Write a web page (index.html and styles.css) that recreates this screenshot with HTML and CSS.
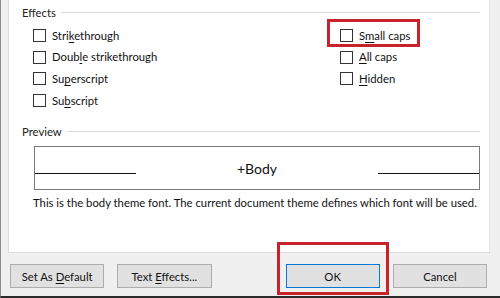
FILE: index.html
```html
<!DOCTYPE html>
<html>
<head>
<meta charset="utf-8">
<link rel="stylesheet" href="styles.css">
</head>
<body>
<div class="screen">
  <div class="panel">
    <div class="group-head"><span class="group-title">Effects</span><span class="group-line"></span></div>
    <div class="effects">
      <label class="opt"><span class="box"></span><span>Stri<u>k</u>ethrough</span></label>
      <label class="opt highlight"><span class="box"></span><span>S<u>m</u>all caps</span><span class="redbox small"></span></label>
      <label class="opt"><span class="box"></span><span>Doub<u>l</u>e strikethrough</span></label>
      <label class="opt"><span class="box"></span><span><u>A</u>ll caps</span></label>
      <label class="opt"><span class="box"></span><span>Su<u>p</u>erscript</span></label>
      <label class="opt"><span class="box"></span><span><u>H</u>idden</span></label>
      <label class="opt"><span class="box"></span><span>Su<u>b</u>script</span></label>
    </div>
    <div class="group-head preview-head"><span class="group-title">Preview</span><span class="group-line"></span></div>
    <div class="preview">
      <span class="rule"></span>
      <span class="sample">+Body</span>
      <span class="rule"></span>
    </div>
    <p class="desc">This is the body theme font. The current document theme defines which font will be used.</p>
  </div>
  <div class="buttons">
    <button class="btn">Set As <u>D</u>efault</button>
    <button class="btn">Text <u>E</u>ffects...</button>
    <button class="btn ok">OK<span class="redbox okbox"></span></button>
    <button class="btn">Cancel</button>
  </div>
</div>
</body>
</html>
```
FILE: styles.css
```css
* { box-sizing: border-box; }
html, body { margin: 0; padding: 0; }
body {
  font-family: Lato, "Noto Sans", sans-serif;
  font-size: 11.3px;
  color: #1a1a1a;
  background: #f0f0f0;
}
u { text-decoration: underline; text-underline-offset: 2px; }
.screen {
  width: 500px;
  height: 298px;
  background: #f0f0f0;
  border-left: 1px solid #8a8a8a;
  border-bottom: 2px solid #2a2a2a;
  display: flex;
  flex-direction: column;
}
.panel {
  margin-left: 7px;
  width: 482px;
  height: 253px;
  background: #fff;
  border-left: 1px solid #dcdcdc;
  border-right: 1px solid #e6e6e6;
  border-bottom: 1px solid #dcdcdc;
  padding: 5px 9px 0 13px;
  display: flex;
  flex-direction: column;
}
.group-head {
  display: flex;
  align-items: center;
  height: 16px;
  line-height: 16px;
}
.group-title { color: #222; }
.group-line {
  flex: 1;
  height: 1px;
  background: #dcdcdc;
  margin-left: 5px;
  margin-top: -1px;
}
.effects {
  margin-top: 4px;
  margin-left: 11px;
  display: grid;
  grid-template-columns: 307px auto;
  grid-auto-rows: 21.6px;
}
.opt {
  display: flex;
  align-items: center;
  gap: 6px;
  position: relative;
  line-height: 16px;
  color: #111;
}
.box {
  width: 13px;
  height: 13px;
  border: 1px solid #333;
  background: #fff;
  flex: none;
}
.redbox {
  position: absolute;
  border: 3px solid #c8232c;
  pointer-events: none;
}
.redbox.small {
  left: -13px;
  top: -6px;
  width: 93px;
  height: 28px;
}
.preview-head { margin-top: 12.6px; }
.preview {
  margin-top: 6px;
  margin-left: 12px;
  height: 44px;
  border: 1px solid #7a7a7a;
  display: flex;
  align-items: flex-start;
}
.rule {
  flex: 0 0 101px;
  height: 1px;
  background: #111;
  margin-top: 26px;
}
.sample {
  flex: 1;
  text-align: center;
  font-size: 14px;
  line-height: 16px;
  margin-top: 14px;
  color: #111;
}
.desc {
  margin: 5px 0 0 11px;
  line-height: 16px;
  color: #111;
  white-space: nowrap;
}
.buttons {
  display: flex;
  padding: 11px 0 0 9px;
}
.btn {
  width: 95px;
  height: 24px;
  background: #e1e1e1;
  border: 1px solid #adadad;
  font-family: inherit;
  font-size: 11.3px;
  color: #111;
  padding: 0;
  margin-right: 13px;
  position: relative;
}
.btn.ok {
  margin-left: 61px;
  border-color: #0078d7;
}
.redbox.okbox {
  left: -10px;
  top: -23px;
  width: 112px;
  height: 53px;
}
```
